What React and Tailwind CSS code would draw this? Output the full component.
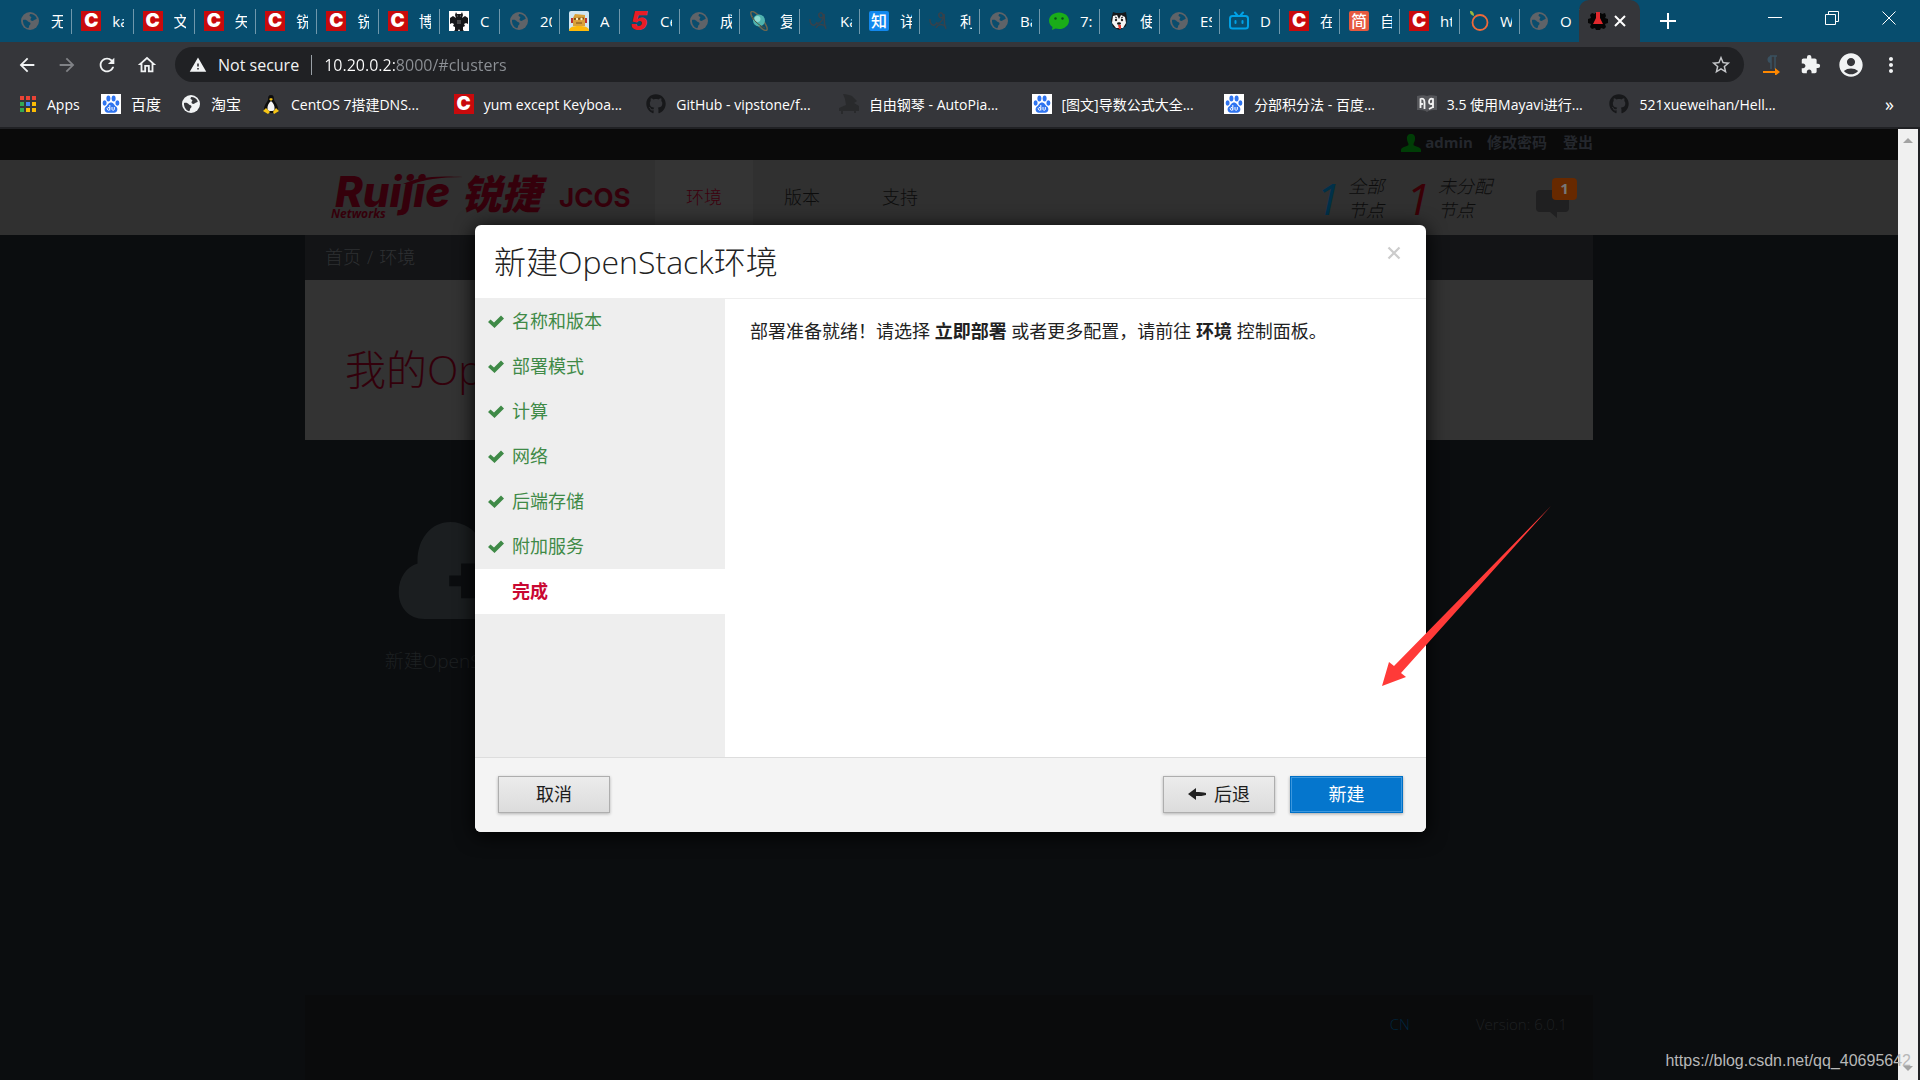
import React from "react";
import {
  MdArrowBack, MdArrowForward, MdRefresh, MdOutlineHome, MdWarning, MdStarBorder,
  MdExtension, MdAccountCircle, MdMoreVert,
} from "react-icons/md";
import { FaGithub } from "react-icons/fa";

const Globe = ({ color = "#5f6368", land = "#0a4d6d" }) => (
  <svg viewBox="0 0 20 20" className="size-5">
    <circle cx="10" cy="10" r="9" fill={color} />
    <path d="M3 9c2-.5 4 0 5 1.500 1 .8 2.500.5 2.500 2 0 1.500-1.500 1.500-1.500 3 0 .8-.4 1.500-1 1.700C5 16.500 2.700 13 3 9zM11 3c3 .3 5 2 5.800 4.500-1 1.300-2.300 1-3.300 2-1 .8-3 .3-3-1 0-1 1-1.200.8-2.200C11 5.500 9.500 5.500 9.500 4.500 9.600 3.600 10 3 11 3z" fill={land} />
  </svg>
);
const RedC = () => (
  <span className="flex size-5 items-center justify-center overflow-hidden bg-[#c90a0c] font-['Inter',sans-serif] text-[19px] leading-5 font-black text-white">C</span>
);
const Five = () => (
  <span className="flex size-5 items-center justify-center font-['Inter',sans-serif] text-[26px] leading-5 font-black text-[#e81c25] italic">5</span>
);
const Glyph = ({ bg, children }) => (
  <span className={"flex size-5 items-center justify-center rounded-xs text-[16px] leading-5 font-medium text-white " + bg}>{children}</span>
);
const Dragon = () => (
  <svg viewBox="0 0 20 20" className="size-5">
    <rect width="20" height="20" fill="#fff" />
    <path d="M7 1l1 2h4l1-2 1 3-1 3 3-2 3 2v6l-2-1-2 1 1 2-2 1v3l1 1h-4l-1-2-1 2H5l1-1v-3l-2-1 1-2-2-1-2 1V7l3-2 3 2-1-3z" fill="#15171a" />
    <path d="M8 5h1M11 5h1M8 10h4M8 12h4" stroke="#777" />
  </svg>
);
const Robot = () => (
  <svg viewBox="0 0 20 20" className="size-5">
    <rect width="20" height="20" rx="2" fill="#cfe6f2" />
    <path d="M6 3l10 1v11H4V7z" fill="#d9a13a" />
    <path d="M5 8l10-.5" stroke="#7c4f16" strokeWidth="2" /><path d="M7 12h6" stroke="#7c4f16" />
    <circle cx="8" cy="8" r="1.200" fill="#fff3c4" /><circle cx="12.500" cy="8" r="1.200" fill="#fff3c4" />
    <path d="M3 7v5M17 7v5" stroke="#b33" strokeWidth="2" />
    <path d="M0 20c0-4 4-5 10-5s10 1 10 5z" fill="#fdb90b" />
  </svg>
);
const Planet = () => (
  <svg viewBox="0 0 20 20" className="size-5">
    <ellipse cx="10" cy="10" rx="12" ry="3.500" transform="rotate(50 10 10)" fill="none" stroke="#6b6650" strokeWidth="1.500" />
    <circle cx="10" cy="9.500" r="6" fill="#4fb3ae" />
    <circle cx="8.500" cy="8" r="3" fill="#8fdcd2" />
    <path d="M3 6c3 5 8 9 13 11" stroke="#544f3c" strokeWidth="1" fill="none" />
  </svg>
);
const Scribble = () => (
  <svg viewBox="0 0 20 20" className="size-5" fill="none" stroke="#36424c" strokeWidth="1.500">
    <path d="M1 8c0 7 5 8 7 3M8 13c4-1 7-5 6-9s-5-2-4 1 5 2 5-2c1 6-1 8 2 15M7 17c2-4 6-5 10-1" />
  </svg>
);
const Wechat = () => (
  <svg viewBox="0 0 20 20" className="size-5">
    <path d="M10 1.500c5.500 0 10 3.600 10 8.200s-4.500 8.300-10 8.300c-1.300 0-2.500-.2-3.500-.5L3 19l.5-3C1.300 14.500 0 12.300 0 9.700 0 5.100 4.500 1.500 10 1.500z" fill="#1aad19" />
    <circle cx="6.500" cy="7.500" r="1.200" fill="#0a4d1d" /><circle cx="13.500" cy="7.500" r="1.200" fill="#0a4d1d" />
  </svg>
);
const Husky = () => (
  <svg viewBox="0 0 20 20" className="size-5">
    <path d="M4 1l3 1h6l4-1 1 7-1 7-7 4-6-3-2-7z" fill="#15181b" />
    <path d="M4 5l4-1 2 4 2-4 4 2 1 6-3 5H7l-4-5z" fill="#f4f4f4" />
    <path d="M6 6l2 1M14 6l-2 1" stroke="#222" />
    <circle cx="7" cy="9" r="1.200" fill="#222" /><circle cx="13" cy="9" r="1.200" fill="#222" />
    <ellipse cx="10" cy="12.500" rx="2" ry="1.200" fill="#111" /><path d="M9 14h3v4h-2z" fill="#e5362c" />
  </svg>
);
const Bili = () => (
  <svg viewBox="0 0 20 20" className="size-5" fill="none" stroke="#00a1e5" strokeWidth="2" strokeLinecap="round">
    <rect x="1" y="5" width="18" height="12.500" rx="2.500" /><path d="M6 1.500L8.500 4.500M14 1.500L11.500 4.500M6.500 10v2M13.500 10v2" />
  </svg>
);
const Orange = () => (
  <svg viewBox="0 0 20 20" className="size-5" fill="none">
    <circle cx="11" cy="11.500" r="7.500" stroke="#ee6a3a" strokeWidth="1.800" />
    <path d="M1 0c3 0 4 2 4 5-3-1-4-2-4-5z" fill="#9cb83f" />
  </svg>
);
const Flask = () => (
  <svg viewBox="0 0 20 20" className="size-5">
    <path d="M7 2h6l1 1 3-1 1 3-1 2 3 1v4l-3 1 1 3-2 2-3-1-1 2H8l-1-2-3 1-2-2 1-3-3-1V8l3-1-1-3 2-2 3 1z" fill="#050505" />
    <path d="M8 1h4v6l3 6H5l3-6z" fill="#e0282c" />
  </svg>
);
const Paw = () => (
  <svg viewBox="0 0 20 20" className="size-5">
    <rect width="20" height="20" fill="#fff" />
    <g fill="#2f74f0">
      <ellipse cx="3.600" cy="9" rx="2" ry="2.700" /><ellipse cx="7.400" cy="4.500" rx="2" ry="2.900" />
      <ellipse cx="12.600" cy="4.500" rx="2" ry="2.900" /><ellipse cx="16.400" cy="9" rx="2" ry="2.700" />
      <path d="M10 8.500c2.500 0 3 2.500 5 4 2.500 2 1.500 6.200-1.800 6.200H6.800C3.500 18.700 2.500 14.500 5 12.500c2-1.500 2.500-4 5-4z" />
    </g>
    <path d="M8.800 11v5.500M8.800 14.500a1.300 1.300 0 1 0-.1 1M11 13v2.500c0 1 2.300 1 2.300 0V13" fill="none" stroke="#fff" />
  </svg>
);
const Tux = () => (
  <svg viewBox="0 0 20 20" className="size-5">
    <path d="M10 1c2.500 0 3 2 3 4.500 0 2 4 5 4 9.500 0 2-2 4-7 4s-7-2-7-4c0-4.500 4-7.500 4-9.500C7 3 7.500 1 10 1z" fill="#0d0d0d" />
    <path d="M10 7c2.500 2 4 5 3.500 8.500-.3 2-6.700 2-7 0C6 12 7.500 9 10 7z" fill="#f5f5f5" />
    <path d="M8 5l2-1 2 1-2 2zM2 17l3-3 4 4-2 2zM18 17l-3-3-3 4 1 2z" fill="#f7c515" />
  </svg>
);
const Piano = () => (
  <svg viewBox="0 0 20 20" className="size-5"><path d="M4 0c4 0 6 1 9 2l5 5-3 2 5 3v5H0v-3l7-3-1-6zM2 16h2v4H2zM15 16h2v3h-2z" fill="#292a2c" /></svg>
);
const Book = () => (
  <svg viewBox="0 0 20 20" className="size-5">
    <path d="M0 2c4-1 8-1 10 0 2-1 6-1 10 0v14c-4 0-8 0-10 2-2-2-6-2-10-2z" fill="#55565a" />
    <path d="M3.500 14V5c2-1 4 0 4 3v7M5 9v2M16 14V5c-3-1-4 1-4 3s2 3 4 1M16 13l-4 2" fill="none" stroke="#f2f2f2" strokeWidth="1.800" />
  </svg>
);
const Apps = () => (
  <svg viewBox="0 0 18 18" className="size-[18px]">
    {["#ea4335", "#ea4335", "#ea4335", "#34a853", "#4285f4", "#fbbc05", "#34a853", "#fbbc05", "#fbbc05"].map((c, i) => (
      <rect key={i} x={(i % 3) * 6} y={1 + Math.floor(i / 3) * 6} width="4" height="4" fill={c} />
    ))}
  </svg>
);
const Check = () => (
  <svg viewBox="0 0 16 14" className="h-3.5 w-4"><path d="M0 7l2.500-2.500 3.500 3L13 .5 16 3.500 6.500 13z" fill="#3f8a47" /></svg>
);

const firstTabs = [
  [<Globe />, "无法"], [<RedC />, "kali"], [<RedC />, "文件"], [<RedC />, "矢量"],
  [<RedC />, "锐捷"], [<RedC />, "锐捷"], [<RedC />, "博客"],
];
const restTabs = [
  [<Dragon />, "C"], [<Globe />, "20"], [<Robot />, "A"], [<Five />, "Ce"], [<Globe />, "成功"],
  [<Planet />, "复制"], [<Scribble />, "Ka"], [<Glyph bg="bg-[#1288ee]">知</Glyph>, "详解"], [<Scribble />, "利用"],
  [<Globe />, "Ba"], [<Wechat />, "7:"], [<Husky />, "使用"], [<Globe />, "ES"], [<Bili />, "D"],
  [<RedC />, "在线"], [<Glyph bg="bg-[#e6593f]">简</Glyph>, "自己"], [<RedC />, "ht"], [<Orange />, "W"], [<Globe />, "O"],
];

function Tab({ icon, label, grow }) {
  return (
    <button className={(grow ? "min-w-0 flex-1" : "w-[60px] shrink-0") + " flex h-[25px] items-center gap-[11px] border-r border-[#6f98ac] pl-[9px]"}>
      <span className="size-5 shrink-0">{icon}</span>
      <span className="w-3 shrink-0 overflow-hidden text-left text-[15px] whitespace-nowrap">{label}</span>
    </button>
  );
}

const links = [
  [<Tux />, "CentOS 7搭建DNS..."], [<RedC />, "yum except Keyboa..."],
  [<FaGithub className="size-5 text-[#17181a]" />, "GitHub - vipstone/f..."],
  [<Piano />, "自由钢琴 - AutoPia..."], [<Paw />, "[图文]导数公式大全..."],
  [<Paw />, "分部积分法 - 百度..."], [<Book />, "3.5 使用Mayavi进行..."],
  [<FaGithub className="size-5 text-[#17181a]" />, "521xueweihan/Hell..."],
];

function Browser() {
  return (
    <header className="border-b-2 border-[#202124] bg-[#35363a] text-white">
      <div className="flex h-[42px] items-center bg-[#074d6e]">
        <div className="ml-[11px] flex w-[429px]">
          {firstTabs.map(([icon, label], i) => <Tab key={i} icon={icon} label={label} grow />)}
        </div>
        <div className="flex w-[1139px]">
          {restTabs.map(([icon, label], i) => <Tab key={i} icon={icon} label={label} />)}
        </div>
        <div className="flex h-full w-[61px] items-center gap-1.5 rounded-t-[10px] bg-[#35363a] pl-[9px]">
          <Flask />
          <button aria-label="Close tab">
            <svg viewBox="0 0 12 12" className="size-3" stroke="#fff" strokeWidth="2"><path d="M1 1l10 10M11 1L1 11" /></svg>
          </button>
        </div>
        <button aria-label="New tab" className="ml-5">
          <svg viewBox="0 0 16 16" className="size-4" stroke="#fff" strokeWidth="2"><path d="M8 0v16M0 8h16" /></svg>
        </button>
        <div className="mr-6 mb-1.5 ml-auto flex items-center gap-[43px]">
          <button aria-label="Minimize"><svg viewBox="0 0 14 14" className="size-[14px]" stroke="#fff"><path d="M0 6.500h14" /></svg></button>
          <button aria-label="Restore"><svg viewBox="0 0 14 14" className="size-[14px]" fill="none" stroke="#fff"><path d="M.5 3.500h10v10H.5zM3.500 3V.5h10v10H11" /></svg></button>
          <button aria-label="Close"><svg viewBox="0 0 14 14" className="size-[14px]" stroke="#fff"><path d="M.5.5l13 13M13.500.5l-13 13" /></svg></button>
        </div>
      </div>
      <div className="flex h-[45px] items-center text-[22px] text-[#f1f3f4]">
        <div className="flex w-[175px] items-center gap-[18px] pl-4">
          <button aria-label="Back"><MdArrowBack /></button>
          <button aria-label="Forward" className="text-[#808286]"><MdArrowForward /></button>
          <button aria-label="Reload"><MdRefresh /></button>
          <button aria-label="Home"><MdOutlineHome /></button>
        </div>
        <form className="flex h-[35px] min-w-0 flex-1 items-center rounded-full bg-[#202124] pl-3.5">
          <MdWarning className="size-[18px]" />
          <label htmlFor="address" className="ml-[11px] text-[16px] whitespace-nowrap">Not secure</label>
          <span className="mx-3 h-5 w-px bg-[#9aa0a6]" />
          <input id="address" defaultValue="10.20.0.2:8000/#clusters" className="min-w-0 flex-1 bg-[linear-gradient(90deg,#fff_71px,#8d9196_71px)] bg-clip-text text-[16px] text-transparent outline-none" />
          <button type="button" aria-label="Bookmark" className="mr-3 text-[#c4c6c9]"><MdStarBorder /></button>
        </form>
        <div className="flex w-[176px] items-center pl-[18px]">
          <button aria-label="Translate">
            <svg viewBox="0 0 20 20" className="size-5">
              <path d="M8 1h7M9 1v13M13 1v13" stroke="#3a5160" strokeWidth="1.500" /><path d="M9 1a3.500 3.500 0 0 0 0 7z" fill="#3a5160" />
              <path d="M1 17h13" stroke="#f80" strokeWidth="2" /><path d="M13 13l5 4-5 4z" fill="#f80" />
            </svg>
          </button>
          <button aria-label="Extensions" className="ml-[18px] text-[21px]"><MdExtension /></button>
          <button aria-label="Profile" className="ml-4 text-[28px]"><MdAccountCircle /></button>
          <button aria-label="Menu" className="ml-3.5 text-[24px]"><MdMoreVert /></button>
        </div>
      </div>
      <nav className="flex h-10 items-center pb-1.5 text-[14px] whitespace-nowrap">
        <a href="#apps" className="flex w-[101px] items-center gap-[9px] pl-5"><Apps />Apps</a>
        <a href="#baidu" className="flex w-20 items-center gap-2.5 text-[15px]"><Paw />百度</a>
        <a href="#taobao" className="flex w-20 items-center gap-2.5 text-[15px]"><Globe color="#f1f3f4" land="#35363a" />淘宝</a>
        <div className="grid min-w-0 flex-1 grid-cols-8">
          {links.map(([icon, label], i) => (
            <a key={i} href="#bookmark" className="flex items-center gap-2.5"><span className="shrink-0">{icon}</span>{label}</a>
          ))}
        </div>
        <button className="w-[118px] pl-[83px] text-left text-[18px]" aria-label="More bookmarks">»</button>
      </nav>
    </header>
  );
}

function Stat({ color, lines }) {
  return (
    <div className="flex items-center gap-2 italic">
      <span className={"w-6 text-[44px] leading-12 font-normal " + color}>1</span>
      <span className="w-[58px] text-[18px] leading-6 font-light whitespace-nowrap text-[#0c0c0c]">{lines[0]}<br />{lines[1]}</span>
    </div>
  );
}

function Page() {
  return (
    <main className="flex min-w-0 flex-1 flex-col bg-[#0b0d0f]">
      <div className="bg-[#0a0a0a]">
        <div className="mx-auto flex h-[31px] w-full max-w-[1288px] items-center justify-end pb-1 text-[15px] font-bold text-[#24272d]">
          <svg viewBox="0 0 20 20" className="mr-1 size-5"><path d="M10 1c3 0 4.500 2 4 5.500-.3 2.500-1.500 3.500-1.500 5 0 2 7.500 2 7.500 5.500v2H0v-2c0-3.500 7.500-3.500 7.500-5.500 0-1.500-1.200-2.500-1.500-5C5.500 3 7 1 10 1z" fill="#003d06" /></svg>
          <a href="#account">admin</a>
          <a href="#password" className="ml-3.5">修改密码</a>
          <a href="#logout" className="ml-4">登出</a>
        </div>
      </div>
      <div className="bg-[#303030]">
        <div className="mx-auto flex h-[75px] w-full max-w-[1288px] items-stretch">
          <a href="#home" className="flex w-[350px] items-center pl-[26px] text-[#35000b]">
            <span className="relative w-[130px]">
              <span className="block pl-1 font-['Inter',sans-serif] text-[42px] leading-8 font-extrabold italic">Ruijie</span>
              <span className="block font-['Open_Sans',sans-serif] text-[12px] leading-3 font-bold italic">Networks</span>
              <svg viewBox="0 0 60 8" className="absolute top-0 left-[72px] h-2 w-[60px]"><path d="M0 8C12 2 30-1 60 1 36 1 20 4 10 8z" fill="#35000b" /></svg>
            </span>
            <span className="w-[98px] pb-2 text-[40px] leading-8 font-black italic">锐捷</span>
            <span className="font-['Inter',sans-serif] text-[26px] font-bold">JCOS</span>
          </a>
          <nav className="flex text-[18px] font-light text-[#0c0c0c]">
            <a href="#clusters" className="flex w-[98px] items-center justify-center bg-[#343434] text-[#3c000d]">环境</a>
            <a href="#releases" className="flex w-[98px] items-center justify-center">版本</a>
            <a href="#support" className="flex w-[98px] items-center justify-center">支持</a>
          </nav>
          <div className="ml-auto flex items-center pr-4">
            <Stat color="text-[#003049]" lines={["全部", "节点"]} />
            <Stat color="text-[#3a0006]" lines={["未分配", "节点"]} />
            <button aria-label="Notifications" className="relative ml-10 h-10 w-[41px]">
              <svg viewBox="0 0 33 28" className="absolute bottom-0 left-0 h-7 w-[33px]"><path d="M4 0h25q4 0 4 4v14q0 4-4 4h-8v6l-7-6H4q-4 0-4-4V4q0-4 4-4z" fill="#202021" /></svg>
              <span className="absolute top-0 right-0 flex h-[22px] w-[25px] items-center justify-center rounded bg-[#672900] text-[15px] font-bold text-[#777]">1</span>
            </button>
          </div>
        </div>
      </div>
      <div className="mx-auto flex w-full max-w-[1288px] flex-1 flex-col">
        <div className="flex h-[45px] items-center bg-[#131416] px-5 text-[18px] font-light text-[#2e3032]">
          <a href="#home">首页</a><span className="px-1.5">/</span><span>环境</span>
        </div>
        <div className="flex h-40 items-center bg-[#333] px-10 pt-5">
          <h1 className="text-[41px] font-light text-[#33000b]">我的OpenStack环境</h1>
        </div>
        <button className="mt-[82px] ml-[76px] flex w-44 flex-col items-center">
          <svg viewBox="0 0 142 98" className="h-[97px] w-[142px]">
            <path d="M26 98C10 98 0 86 0 71c0-15 8-26 19-29C18 18 32 0 52 0c14 0 26 8 31 20 24-8 46 8 42 30 24 8 22 48-8 48z" fill="#1b1e20" />
            <path d="M51 54h12V42h15v12h12v11H78v12H63V65H51z" fill="#0b0d0f" />
          </svg>
          <span className="mt-7 text-[19px] font-light whitespace-nowrap text-[#1d2022]">新建OpenStack环境</span>
        </button>
        <footer className="mt-auto flex h-[85px] justify-end gap-[66px] bg-[#0a0b0c] pt-[17px] pr-[26px] text-[15px] leading-6 font-light">
          <a href="#language" className="text-[#00263f]">CN</a>
          <span className="text-[#1e2022]">Version: 6.0.1</span>
        </footer>
      </div>
    </main>
  );
}

const steps = ["名称和版本", "部署模式", "计算", "网络", "后端存储", "附加服务", "完成"];
const grayButton = "flex h-[37px] w-28 items-center justify-center gap-2 border border-[#aeaeae] bg-linear-to-b from-[#ececec] to-[#dcdcdc] text-[#1c1c1c] shadow-[0_1px_3px_#0004]";

function Dialog() {
  return (
    <section role="dialog" aria-label="新建OpenStack环境" className="absolute inset-x-0 top-[225px] mx-auto w-[951px] overflow-hidden rounded-md bg-white text-[18px] text-[#222] shadow-[0_3px_20px_#000]">
      <div className="flex h-[74px] items-center justify-between border-b border-[#eee] pr-[25px] pl-[19px]">
        <h2 className="text-[32px] font-light text-[#222]">新建OpenStack环境</h2>
        <button aria-label="关闭" className="mb-[18px]">
          <svg viewBox="0 0 14 14" className="size-[14px]" stroke="#ccc" strokeWidth="2.200"><path d="M1.500 1.500l11 11M12.500 1.500l-11 11" /></svg>
        </button>
      </div>
      <div className="flex h-[458px]">
        <ul className="w-[250px] bg-[#eee]">
          {steps.map((s, i) => (
            <li key={s}>
              <button className={"flex h-[45px] w-full items-center gap-2 pl-[13px] " + (i === 6 ? "bg-white font-bold text-[#c90832]" : "text-[#3f8a47]")}>
                <span className="w-4">{i < 6 && <Check />}</span>{s}
              </button>
            </li>
          ))}
        </ul>
        <p className="px-[25px] pt-[19px] leading-[26px]">部署准备就绪！请选择 <b>立即部署</b> 或者更多配置，请前往 <b>环境</b> 控制面板。</p>
      </div>
      <div className="flex h-[75px] items-center border-t border-[#ddd] bg-[#f4f4f4] px-[23px] pb-0.5">
        <button className={grayButton}>取消</button>
        <button className={grayButton + " ml-auto"}>
          <svg viewBox="0 0 18 12" className="h-3 w-[18px]"><path d="M0 6l8-6v4c4 0 7 0 10 1v2c-3 1-6 1-10 1v4z" fill="#222" /></svg>后退
        </button>
        <button className="ml-[15px] h-[37px] w-[113px] border border-[#0070c6] bg-[#0576cd] text-white shadow-[inset_0_0_0_1px_#3b97de,0_1px_3px_#0005]">新建</button>
      </div>
    </section>
  );
}

export default function App() {
  return (
    <div lang="zh-CN" className="relative flex min-h-screen flex-col overflow-hidden bg-[#202124] font-['Open_Sans','Noto_Sans_CJK_SC',sans-serif]">
      <Browser />
      <div className="flex flex-1 pr-0.5">
        <Page />
        <div className="flex w-5 flex-col items-center justify-between bg-[#f0f0f0] py-[9px]">
          <svg viewBox="0 0 10 5" className="h-[5px] w-2.5"><path d="M0 5l5-5 5 5z" fill="#a3a3a3" /></svg>
          <svg viewBox="0 0 10 5" className="h-[5px] w-2.5"><path d="M0 0l5 5 5-5z" fill="#a3a3a3" /></svg>
        </div>
      </div>
      <div className="absolute inset-0 right-[19px]"><Dialog /></div>
      <svg viewBox="0 0 175 190" className="pointer-events-none absolute top-[500px] left-[1380px] h-[190px] w-[175px]">
        <path d="M171 6L14 166 9 162 2 186 26 177 21 173z" fill="#ff3a38" />
      </svg>
      <span className="absolute right-[9px] bottom-[7px] font-['Liberation_Sans',sans-serif] text-[16px] leading-6 text-[#b8b8b8]">https://blog.csdn.net/qq_40695642</span>
    </div>
  );
}
